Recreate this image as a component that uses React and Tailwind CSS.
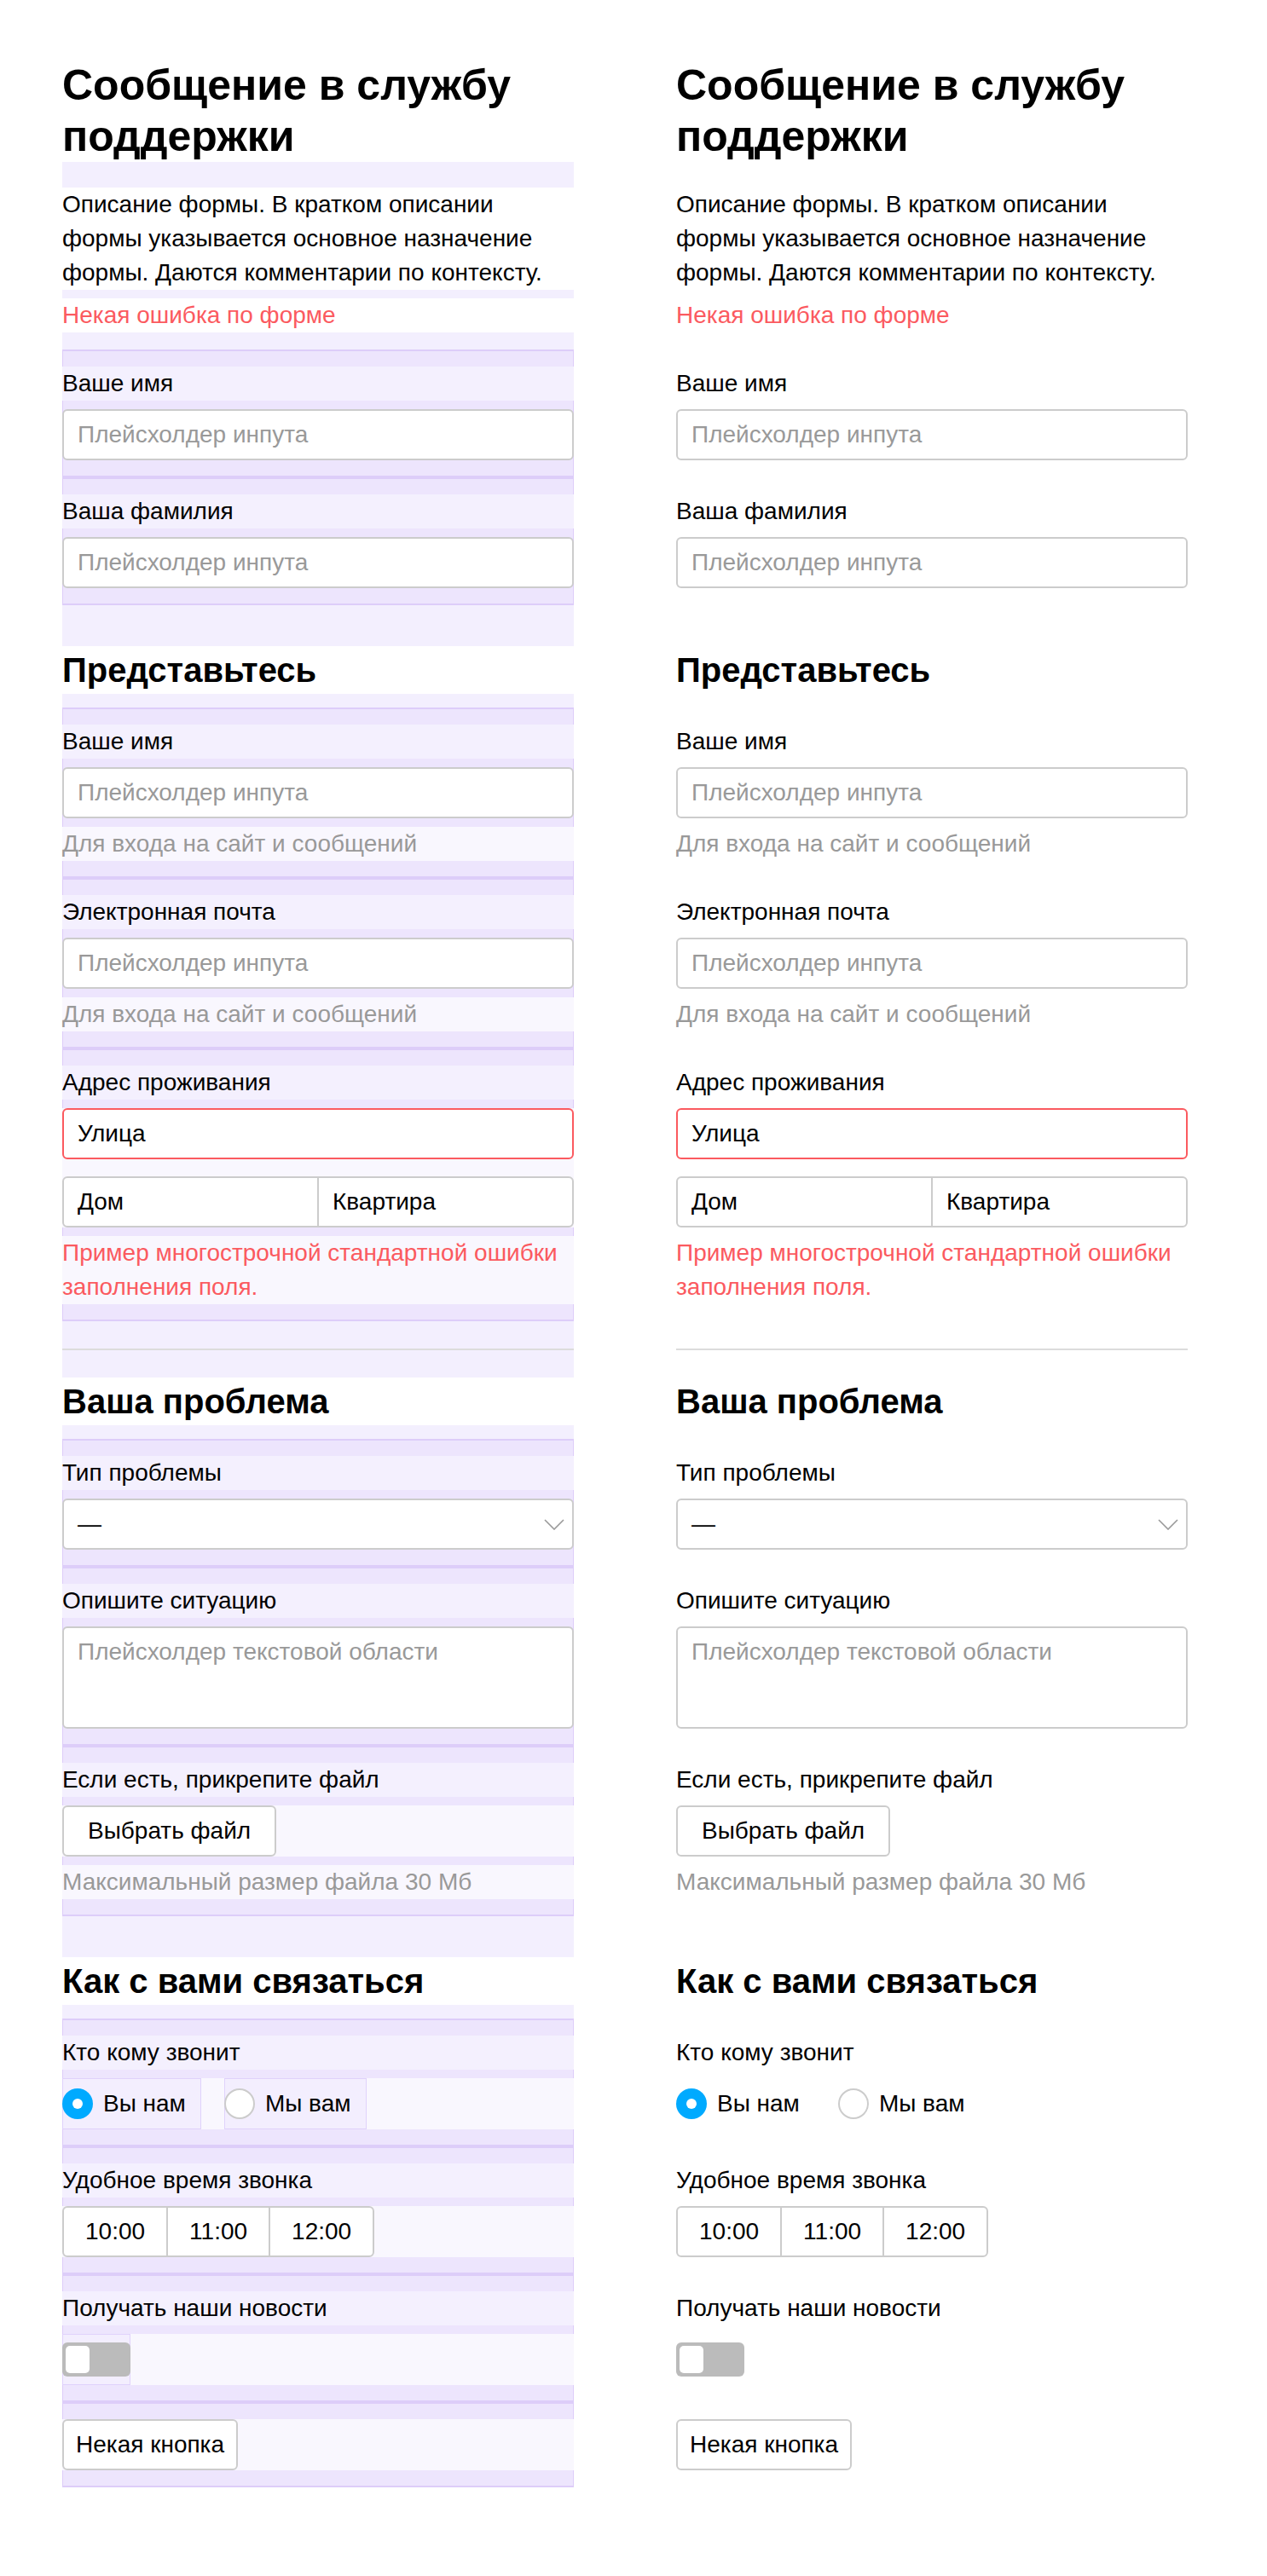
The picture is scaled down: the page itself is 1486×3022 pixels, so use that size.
import React from "react";

// Debug overlay colours (left column only)
const BAND = "bg-[#f3effe]";
const ITEM = "bg-[#ede5fd] shadow-[inset_0_2px_0_#ddcdf9,inset_0_-2px_0_#ddcdf9,inset_1px_0_0_#ddcdf9,inset_-1px_0_0_#ddcdf9]";
const LABEL = "bg-[#f4f0fe]";
const ROW = "bg-[#f9f7fe]";
const BOX = "bg-[#f3eefe] shadow-[inset_0_0_0_1px_#e0d2fb]";

const Gap = ({ d, h }) => <div className={`${h} ${d ? BAND : ""}`} />;

const Field = ({ d, label, hint, error, children }) => (
  <div className={`flex flex-col py-[20px] ${d ? ITEM : ""}`}>
    {label && (
      <div className={`text-[28px] leading-[40px] ${d ? LABEL : ""}`}>{label}</div>
    )}
    {label && <div className="h-[10px]" />}
    {children}
    {hint && (
      <div className={`mt-[10px] text-[28px] leading-[40px] text-[#999] ${d ? ROW : ""}`}>
        {hint}
      </div>
    )}
    {error && (
      <div className={`mt-[10px] text-[28px] leading-[40px] text-[#fb5a5f] ${d ? ROW : ""}`}>
        {error}
      </div>
    )}
  </div>
);

const Input = ({ placeholder, value, invalid }) => (
  <input
    readOnly
    placeholder={placeholder}
    defaultValue={value}
    className={`block h-[60px] w-full rounded-[6px] border-2 bg-white px-[16px] py-[8px] text-[28px] leading-[40px] text-black outline-none placeholder:text-[#999] ${
      invalid ? "border-[#fb5a5f]" : "border-[#ccc]"
    }`}
  />
);

const Chevron = () => (
  <svg width="24" height="13" viewBox="0 0 24 13" fill="none" aria-hidden="true">
    <polyline points="1,1 12,12 23,1" stroke="#999" strokeWidth="1.6" />
  </svg>
);

const Form = ({ d }) => (
  <div className="flex w-[600px] flex-col">
    <h1 className="text-[50px] font-bold leading-[60px]">Сообщение в службу поддержки</h1>
    <Gap d={d} h="h-[30px]" />
    <p className="text-[28px] leading-[40px]">
      Описание формы. В кратком описании формы указывается основное назначение формы. Даются
      комментарии по контексту.
    </p>
    <Gap d={d} h="h-[10px]" />
    <p className="text-[28px] leading-[40px] text-[#fb5a5f]">Некая ошибка по форме</p>
    <Gap d={d} h="h-[20px]" />
    <Field d={d} label="Ваше имя">
      <Input placeholder="Плейсхолдер инпута" />
    </Field>
    <Field d={d} label="Ваша фамилия">
      <Input placeholder="Плейсхолдер инпута" />
    </Field>

    <Gap d={d} h="h-[48px]" />
    <h2 className="text-[40px] font-bold leading-[56px]">Представьтесь</h2>
    <Gap d={d} h="h-[16px]" />
    <Field d={d} label="Ваше имя" hint="Для входа на сайт и сообщений">
      <Input placeholder="Плейсхолдер инпута" />
    </Field>
    <Field d={d} label="Электронная почта" hint="Для входа на сайт и сообщений">
      <Input placeholder="Плейсхолдер инпута" />
    </Field>
    <Field
      d={d}
      label="Адрес проживания"
      error="Пример многострочной стандартной ошибки заполнения поля."
    >
      <div className={`flex flex-col gap-[20px] ${d ? ROW : ""}`}>
        <Input value="Улица" invalid />
        <div className="flex h-[60px] rounded-[6px] border-2 border-[#ccc] bg-white text-[28px] leading-[40px]">
          <div className="flex-1 px-[16px] py-[8px]">Дом</div>
          <div className="flex-1 border-l-2 border-[#ccc] px-[16px] py-[8px]">Квартира</div>
        </div>
      </div>
    </Field>

    <Gap d={d} h="h-[32px]" />
    <div className="h-[2px] bg-[#dcdcdc]" />
    <Gap d={d} h="h-[32px]" />
    <h2 className="text-[40px] font-bold leading-[56px]">Ваша проблема</h2>
    <Gap d={d} h="h-[16px]" />
    <Field d={d} label="Тип проблемы">
      <div className="flex h-[60px] items-center justify-between rounded-[6px] border-2 border-[#ccc] bg-white pl-[16px] pr-[9px] text-[28px] leading-[40px]">
        <span>—</span>
        <Chevron />
      </div>
    </Field>
    <Field d={d} label="Опишите ситуацию">
      <textarea
        readOnly
        placeholder="Плейсхолдер текстовой области"
        className="block h-[120px] w-full resize-none rounded-[6px] border-2 border-[#ccc] bg-white px-[16px] py-[8px] text-[28px] leading-[40px] outline-none placeholder:text-[#999]"
      />
    </Field>
    <Field d={d} label="Если есть, прикрепите файл" hint="Максимальный размер файла 30 Мб">
      <div className={`flex ${d ? ROW : ""}`}>
        <button
          type="button"
          className="h-[60px] rounded-[6px] border-2 border-[#ccc] bg-white px-[28px] text-[28px] leading-[40px]"
        >
          Выбрать файл
        </button>
      </div>
    </Field>

    <Gap d={d} h="h-[48px]" />
    <h2 className="text-[40px] font-bold leading-[56px]">Как с вами связаться</h2>
    <Gap d={d} h="h-[16px]" />
    <Field d={d} label="Кто кому звонит">
      <div className={`flex h-[60px] gap-[27px] text-[28px] leading-[40px] ${d ? ROW : ""}`}>
        <label className={`flex items-center gap-[12px] pr-[18px] ${d ? BOX : ""}`}>
          <span className="flex h-[36px] w-[36px] items-center justify-center rounded-full bg-[#00aaff]">
            <span className="h-[12px] w-[12px] rounded-full bg-white" />
          </span>
          Вы нам
        </label>
        <label className={`flex items-center gap-[12px] pr-[18px] ${d ? BOX : ""}`}>
          <span className="h-[36px] w-[36px] rounded-full border-2 border-[#ccc] bg-white" />
          Мы вам
        </label>
      </div>
    </Field>
    <Field d={d} label="Удобное время звонка">
      <div className={`flex ${d ? ROW : ""}`}>
        <div className="flex h-[60px] rounded-[6px] border-2 border-[#ccc] bg-white text-[28px] leading-[40px]">
          {["10:00", "11:00", "12:00"].map((t, i) => (
            <div
              key={t}
              className={`px-[25px] py-[8px] ${i > 0 ? "border-l-2 border-[#ccc]" : ""}`}
            >
              {t}
            </div>
          ))}
        </div>
      </div>
    </Field>
    <Field d={d} label="Получать наши новости">
      <div className={`flex ${d ? ROW : ""}`}>
        <div className={`flex h-[60px] w-[80px] items-center ${d ? BOX : ""}`}>
          <div className="flex h-[40px] w-[80px] items-center rounded-[6px] bg-[#bbb] pl-[4px]">
            <div className="h-[32px] w-[28px] rounded-[5px] bg-white" />
          </div>
        </div>
      </div>
    </Field>
    <Field d={d}>
      <div className={`flex ${d ? ROW : ""}`}>
        <button
          type="button"
          className="h-[60px] rounded-[6px] border-2 border-[#ccc] bg-white px-[14px] text-[28px] leading-[40px]"
        >
          Некая кнопка
        </button>
      </div>
    </Field>
  </div>
);

export default function App() {
  return (
    <div className="flex min-h-screen gap-[120px] bg-white pb-[80px] pl-[73px] pt-[70px] font-['Liberation_Sans',Arial,sans-serif] text-black">
      <Form d />
      <Form />
    </div>
  );
}
